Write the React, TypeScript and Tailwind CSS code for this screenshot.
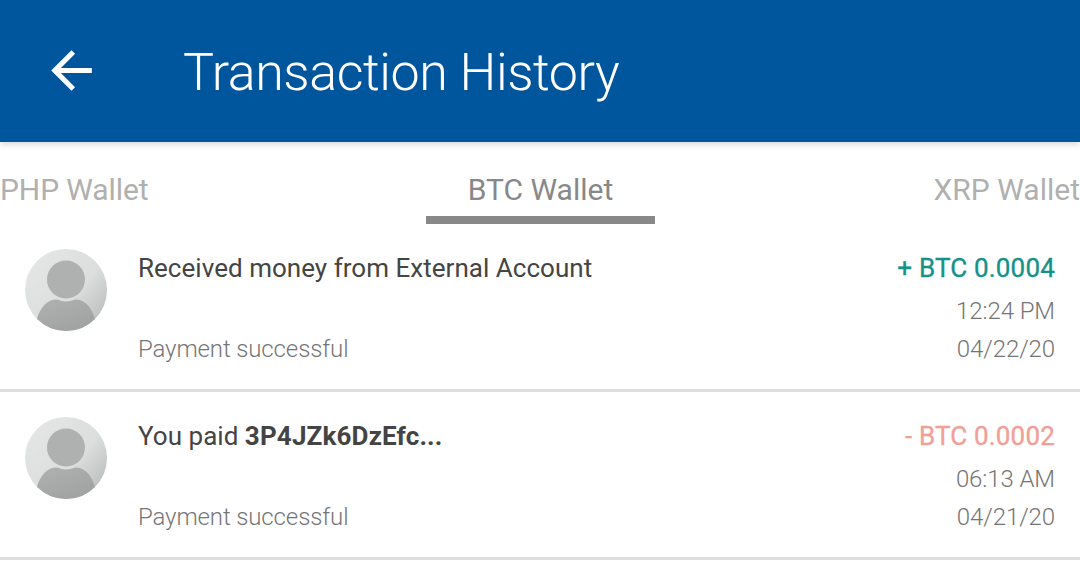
import { clsx } from "clsx";

type Transaction = {
  id: string;
  label: string;
  payee?: string;
  status: string;
  amount: string;
  incoming: boolean;
  time: string;
  date: string;
};

const transactions: Transaction[] = [
  {
    id: "1",
    label: "Received money from External Account",
    status: "Payment successful",
    amount: "+ BTC 0.0004",
    incoming: true,
    time: "12:24 PM",
    date: "04/22/20",
  },
  {
    id: "2",
    label: "You paid ",
    payee: "3P4JZk6DzEfc...",
    status: "Payment successful",
    amount: "- BTC 0.0002",
    incoming: false,
    time: "06:13 AM",
    date: "04/21/20",
  },
];

function BackIcon() {
  return (
    <svg viewBox="0 0 24 24" className="mb-0.5 size-[61px]" fill="currentColor">
      <path d="M20 11H7.83l5.59-5.59L12 4l-8 8 8 8 1.41-1.41L7.83 13H20v-2z" />
    </svg>
  );
}

function Avatar({ id }: { id: string }) {
  return (
    <svg viewBox="0 0 82 82" className="mt-px size-[82px] shrink-0">
      <defs>
        <linearGradient id={`bg-${id}`} x1="0.1" y1="0.1" x2="0.95" y2="0.85">
          <stop offset="0" stopColor="#e4e6e6" />
          <stop offset="0.6" stopColor="#dcdede" />
          <stop offset="1" stopColor="#bcbebe" />
        </linearGradient>
        <linearGradient id={`body-${id}`} x1="0" y1="0" x2="0.6" y2="1">
          <stop offset="0" stopColor="#b0b2b2" />
          <stop offset="1" stopColor="#a0a1a1" />
        </linearGradient>
        <clipPath id={`clip-${id}`}>
          <circle cx="41" cy="41" r="41" />
        </clipPath>
      </defs>
      <g clipPath={`url(#clip-${id})`}>
        <rect width="82" height="82" fill={`url(#bg-${id})`} />
        <circle cx="41" cy="30.5" r="19" fill="#afb1b1" />
        <path
          d="M12 70C15 58 23 50.5 31 50.5Q33 50.5 35 51.5Q41 53.5 47 51.5Q49 50.5 51 50.5C59 50.5 67 58 70 70V84H12Z"
          fill={`url(#body-${id})`}
        />
      </g>
    </svg>
  );
}

function TransactionRow({ item }: { item: Transaction }) {
  return (
    <li className="flex h-[168px] border-b-3 border-[#dddddd] pt-6 pr-[25px] pl-[25px]">
      <Avatar id={item.id} />

      <div className="ml-[31px] flex h-[120px] flex-1 flex-col justify-between">
        <p className="text-[26px] leading-10 tracking-[0.03px] whitespace-pre text-[#444444]">
          {item.label}
          {item.payee && (
            <span className="font-bold tracking-[0.15px]">{item.payee}</span>
          )}
        </p>
        <p className="text-2xl/[38px] font-light tracking-[-0.12px] text-[#757575]">
          {item.status}
        </p>
      </div>

      <div className="text-right text-2xl/[38px] font-light tracking-[-0.1px] text-[#757575]">
        <p
          className={clsx(
            "mb-1 text-[26px] leading-10 font-normal tracking-[0.18px] [-webkit-text-stroke:0.35px]",
            item.incoming ? "text-[#16918a]" : "text-[#f0a096]"
          )}
        >
          {item.amount}
        </p>
        <p>{item.time}</p>
        <p>{item.date}</p>
      </div>
    </li>
  );
}

export default function App() {
  return (
    <div className="h-[579px] overflow-hidden bg-white font-['Roboto',sans-serif]">
      <header className="flex h-[142px] items-center bg-[#00569d] pl-[41px] text-white shadow-[0_3px_6px_rgba(0,0,0,0.14)]">
        <BackIcon />
        <h1 className="ml-[81px] pt-1 text-[52px] leading-none font-light tracking-[-0.45px]">
          Transaction History
        </h1>
      </header>

      <nav className="grid h-[82px] grid-cols-[426px_229px_1fr] pt-6 text-[30px] leading-[48px] whitespace-nowrap text-[#b0b0b0]">
        <span className="tracking-[-0.1px]">PHP Wallet</span>
        <span className="border-b-8 border-[#888888] pb-0.5 text-center text-[#888888]">
          BTC Wallet
        </span>
        <span className="text-right">XRP Wallet</span>
      </nav>

      <ul>
        {transactions.map((item) => (
          <TransactionRow key={item.id} item={item} />
        ))}
      </ul>
    </div>
  );
}
